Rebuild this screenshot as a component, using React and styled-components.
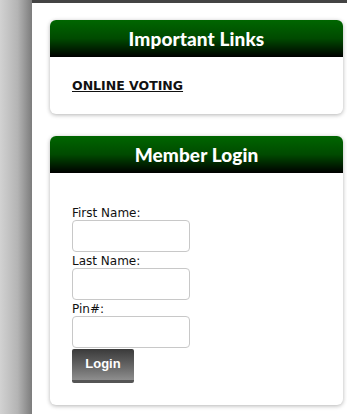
import React from "react";
import styled, { createGlobalStyle } from "styled-components";

const Global = createGlobalStyle`
  html, body { margin: 0; padding: 0; background: #fff; }
  body { font-family: "DejaVu Sans", Verdana, sans-serif; }
`;

const Page = styled.div`
  display: flex;
  min-height: 414px;
`;

const Sidebar = styled.div`
  width: 32px;
  flex: none;
  background: linear-gradient(to right, #d2d2d2 0%, #b4b4b4 55%, #7c7c7c 100%);
`;

const Main = styled.div`
  flex: 1;
  border-top: 3px solid #444;
  padding: 17px 4px 0 18px;
  display: flex;
  flex-direction: column;
  gap: 22px;
`;

const Card = styled.section`
  background: #fff;
  border-radius: 6px;
  box-shadow: 0 1px 4px rgba(0, 0, 0, 0.3);
`;

const CardHeader = styled.h2`
  margin: 0;
  height: 37px;
  display: flex;
  align-items: center;
  justify-content: center;
  border-radius: 6px 6px 0 0;
  background: linear-gradient(to bottom, #006600 0%, #004a00 50%, #000 100%);
  color: #fff;
  font-family: Lato, "Open Sans", sans-serif;
  font-weight: 900;
  font-size: 19px;
  letter-spacing: 0.1px;
`;

const CardBody = styled.div`
  padding: ${(p) => p.$pad};
`;

const LinkText = styled.a`
  font-family: "DejaVu Sans", Verdana, sans-serif;
  font-weight: 700;
  font-size: 12.5px;
  color: #111;
  text-decoration: underline;
  line-height: 15px;
  display: block;
`;

const Form = styled.form`
  display: flex;
  flex-direction: column;
  align-items: flex-start;
`;

const Label = styled.label`
  font-size: 12px;
  color: #111;
  line-height: 14px;
`;

const Input = styled.input`
  box-sizing: border-box;
  width: 118px;
  height: 32px;
  margin: 0 0 2px 0;
  border: 1px solid #c8c8c8;
  border-radius: 4px;
  background: #fff;
  &:last-of-type { margin-bottom: 1px; }
`;

const Button = styled.button`
  box-sizing: border-box;
  width: 62px;
  height: 34px;
  border: none;
  border-bottom: 3px solid #555;
  border-radius: 2px;
  background: linear-gradient(to bottom, #3a3a3a 0%, #6a6a6a 60%, #8e8e8e 100%);
  color: #fff;
  font-family: "Liberation Sans", Arial, sans-serif;
  font-weight: 700;
  font-size: 13px;
  padding: 0 0 2px 0;
`;

export default function App() {
  return (
    <>
      <Global />
      <Page>
        <Sidebar />
        <Main>
          <Card>
            <CardHeader>Important Links</CardHeader>
            <CardBody $pad="21px 22px 21px">
              <LinkText href="#">ONLINE VOTING</LinkText>
            </CardBody>
          </Card>
          <Card>
            <CardHeader>Member Login</CardHeader>
            <CardBody $pad="33px 22px 22px">
              <Form onSubmit={(e) => e.preventDefault()}>
                <Label>First Name:</Label>
                <Input type="text" />
                <Label>Last Name:</Label>
                <Input type="text" />
                <Label>Pin#:</Label>
                <Input type="password" />
                <Button type="submit">Login</Button>
              </Form>
            </CardBody>
          </Card>
        </Main>
      </Page>
    </>
  );
}
